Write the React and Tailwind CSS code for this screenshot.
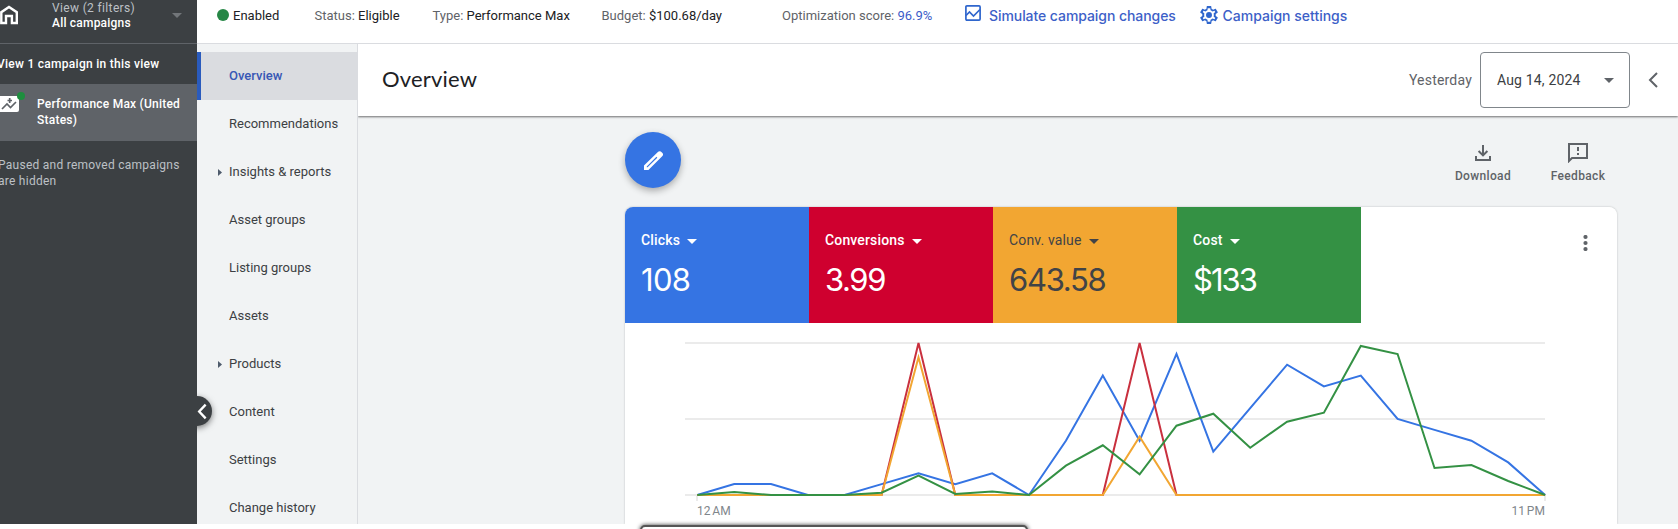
import React from 'react';

const HOURS = 24;
const CHART_LEFT = 72.3;
const CHART_STEP = 36.86;
const BASELINE = 172;

const clicks = [0, 1, 1, 0, 0, 1, 2, 1, 2, 0, 5, 11, 5, 13, 4, 8, 12, 10, 11, 7, 6, 5, 3, 0].map(v => v * 10.857);
const spikes = (first, second) => Array.from({ length: HOURS }, (_, i) => (i === 6 ? first : i === 12 ? second : 0));
const conversions = spikes(152, 152);
const convValue = spikes(137.7, 58.3);
const cost = [0, 3, 0, 0, 0, 2.3, 19.3, 1, 3.5, 0, 29.3, 49.7, 20.7, 69.3, 81.3, 47.3, 73.3, 82.3, 149, 141, 27, 30, 14, 0];

const series = [
    { id: 'clicks', color: '#3574e3', data: clicks },
    { id: 'conversions', color: '#c9303e', data: conversions },
    { id: 'value', color: '#f2a632', data: convValue },
    { id: 'cost', color: '#349144', data: cost },
];

const toPoints = (data) => data.map((v, i) => `${(CHART_LEFT + i * CHART_STEP).toFixed(1)},${(BASELINE - v).toFixed(1)}`).join(' ');

const navItems = [
    { label: 'Overview', active: true },
    { label: 'Recommendations' },
    { label: 'Insights & reports', expandable: true },
    { label: 'Asset groups' },
    { label: 'Listing groups' },
    { label: 'Assets' },
    { label: 'Products', expandable: true },
    { label: 'Content' },
    { label: 'Settings' },
    { label: 'Change history' },
];

const metrics = [
    { label: 'Clicks', value: '108', tile: 'bg-[#3574e3] text-white', weight: 'font-medium', spacing: 'tracking-[-0.7px]' },
    { label: 'Conversions', value: '3.99', tile: 'bg-[#cf002f] text-white', weight: 'font-medium', spacing: 'tracking-[-1.4px]' },
    { label: 'Conv. value', value: '643.58', tile: 'bg-[#f2a632] text-[#414347]', weight: 'font-normal', spacing: 'tracking-[-1.3px]' },
    { label: 'Cost', value: '$133', tile: 'bg-[#349144] text-white', weight: 'font-medium', spacing: 'tracking-[-2px]' },
];

const Caret = ({ className }) => (
    <svg viewBox="0 0 10 5" className={className} fill="currentColor">
        <path d="M0 0h10L5 5z" />
    </svg>
);

const Sidebar = () => (
    <aside className="relative z-10 flex h-[524px] w-[197px] shrink-0 flex-col bg-[#3c4043] text-[12px] leading-4 text-white">
        <div className="flex h-11 shrink-0 border-b border-[#5f6368]">
            <svg viewBox="0 0 18 20" className="mt-[5px] h-5 w-[18px] shrink-0" fill="none" stroke="currentColor" strokeWidth="2.4">
                <path d="M1.3 18V7.2L9 1.9l7.8 5.3V18h-4.9v-7H6v7z" />
            </svg>
            <div className="ml-[34px] w-[120px] font-medium tracking-[0.2px]">
                <p className="font-normal tracking-[0.35px] text-[#bdc1c6]">View (2 filters)</p>
                <p className="-mt-px">All campaigns</p>
            </div>
            <Caret className="mt-[13px] h-[5px] w-[10px] text-[#72767a]" />
        </div>
        <p className="-ml-[3px] h-10 shrink-0 pt-3 font-medium tracking-[0.27px] whitespace-nowrap">View 1 campaign in this view</p>
        <div className="flex h-[57px] shrink-0 bg-[#5f6368] pt-3">
            <div className="relative h-4 w-[19px] shrink-0 rounded-r-[2px] bg-white">
                <svg viewBox="0 0 19 16" className="h-4 w-[19px]" fill="none" stroke="#5f6368" strokeWidth="1.7">
                    <path d="M2 13l5-5 3.5 3.5L16 6M9.7 2v5M7.5 4.5h4.5" />
                </svg>
                <span className="absolute -top-1 right-[-6px] h-2 w-2 rounded-full bg-[#1e8e3e]" />
            </div>
            <p className="ml-[18px] font-medium tracking-[0.23px]">Performance Max (United<br />States)</p>
        </div>
        <p className="-ml-[2px] pt-4 tracking-[0.26px] whitespace-nowrap text-[#bdc1c6]">Paused and removed campaigns<br />are hidden</p>
        <div className="absolute top-[389px] left-[197px] h-[50px] w-8 overflow-hidden">
            <div className="-ml-[15px] mt-[7px] flex h-[30px] w-[30px] items-center justify-end rounded-full bg-[#3c4043] pr-[5px] shadow-[0_2px_6px_rgba(0,0,0,0.5)]">
                <svg viewBox="0 0 11 18" className="h-[17px] w-[10px]" fill="none" stroke="white" strokeWidth="2.6">
                    <path d="M9.5 1.5L2.4 9l7.1 7.5" />
                </svg>
            </div>
        </div>
    </aside>
);

const StatusBar = () => (
    <div className="flex h-11 shrink-0 items-start border-b border-[#dadce0] pt-2 pl-5 text-[13px] leading-4 whitespace-nowrap text-[#5f6368]">
        <span className="mt-px h-3 w-3 rounded-full bg-[#268746]" />
        <span className="ml-1 w-[81.5px] text-[#202124]">Enabled</span>
        <p className="w-[118px]">Status: <span className="text-[#202124]">Eligible</span></p>
        <p className="w-[169px]">Type: <span className="text-[#202124]">Performance Max</span></p>
        <p className="w-[180.5px]">Budget: <span className="text-[#202124]">$100.68/day</span></p>
        <p className="w-[183px]">Optimization score: <span className="text-[#3c5bc9]">96.9%</span></p>
        <svg viewBox="0 0 16 16" className="-mt-[3px] h-4 w-4" fill="none" stroke="#2f66cd" strokeWidth="1.7">
            <rect x="0.9" y="0.9" width="14.2" height="14.2" rx="1" />
            <path d="M1 10.5l3.5-3.5 4 4L15 4.5" />
        </svg>
        <span className="ml-2 w-[210.5px] font-['Inter'] text-[14px] font-medium tracking-[-0.07px] text-[#3d5fc8]">Simulate campaign changes</span>
        <svg viewBox="2 2 20 20" className="-mt-[2px] h-[18px] w-[18px]" fill="#2f66cd">
            <path fillRule="evenodd" d="M19.43 12.98c.04-.32.07-.64.07-.98s-.03-.66-.07-.98l2.11-1.65c.19-.15.24-.42.12-.64l-2-3.46c-.12-.22-.39-.3-.61-.22l-2.49 1c-.52-.4-1.08-.73-1.69-.98l-.38-2.65C14.46 2.18 14.25 2 14 2h-4c-.25 0-.46.18-.49.42l-.38 2.65c-.61.25-1.17.59-1.69.98l-2.49-1c-.23-.09-.49 0-.61.22l-2 3.46c-.13.22-.07.49.12.64l2.11 1.65c-.04.32-.07.65-.07.98s.03.66.07.98l-2.11 1.65c-.19.15-.24.42-.12.64l2 3.46c.12.22.39.3.61.22l2.49-1c.52.4 1.08.73 1.69.98l.38 2.65c.03.24.24.42.49.42h4c.25 0 .46-.18.49-.42l.38-2.65c.61-.25 1.17-.59 1.69-.98l2.49 1c.23.09.49 0 .61-.22l2-3.46c.12-.22.07-.49-.12-.64zM17.3 11.3c.08.6.08.8 0 1.4l-.2 1.1 1.8 1.5-.8 1.4-2.2-.8-1.2.9-1 .4-.3 2.4h-2.8l-.3-2.4-1-.4-1.2-.9-2.2.8-.8-1.4 1.8-1.5-.2-1.1a5 5 0 010-1.4l.2-1.1-1.8-1.5.8-1.4 2.2.8 1.2-.9 1-.4.3-2.4h2.8l.3 2.4 1 .4 1.2.9 2.2-.8.8 1.4-1.8 1.5z" />
            <circle cx="12" cy="12" r="3.3" />
        </svg>
        <span className="ml-[5px] font-['Inter'] text-[14px] font-medium tracking-[0px] text-[#3d5fc8]">Campaign settings</span>
    </div>
);

const CampaignNav = () => (
    <nav className="h-[480px] w-[161px] shrink-0 overflow-hidden border-r border-[#dadce0] bg-[#f1f3f4] pt-2 text-[13px] text-[#3c4043]">
        {navItems.map((item) => (
            <div
                key={item.label}
                className={`flex h-12 items-center border-l-4 whitespace-nowrap ${item.active ? 'border-[#2a5bbd] bg-[#dadce0] font-medium text-[#3757b5]' : 'border-transparent'}`}
            >
                <span className="flex w-7 pl-[17px]">
                    {item.expandable && (
                        <svg viewBox="0 0 4 7" className="h-[7px] w-1" fill="#4f5b6c"><path d="M0 0l4 3.5L0 7z" /></svg>
                    )}
                </span>
                {item.label}
            </div>
        ))}
    </nav>
);

const PageHeader = () => (
    <header className="relative flex h-[72px] shrink-0 items-center bg-white pl-6 shadow-[0_1px_2px_rgba(0,0,0,0.55)]">
        <h1 className="-mt-[3px] font-['Lato'] text-[22px] tracking-[0.2px] text-[#202124]">Overview</h1>
        <span className="ml-auto text-[14px] tracking-[0.2px] text-[#5f6368]">Yesterday</span>
        <button className="ml-2 flex h-14 w-[150px] items-center justify-between rounded-[4px] border border-[#80868b] pr-[15px] pl-4 text-[14px] tracking-[0.17px] text-[#3c4043]">
            Aug 14, 2024
            <Caret className="h-[5px] w-[10px] text-[#5f6368]" />
        </button>
        <svg viewBox="0 0 10 16" className="mr-[20px] ml-[18px] h-4 w-[10px]" fill="none" stroke="#5f6368" strokeWidth="2">
            <path d="M9 1L2 8l7 7" />
        </svg>
    </header>
);

const Toolbar = () => (
    <div className="flex h-[75px] items-start justify-between pt-4">
        <button className="flex h-14 w-14 items-center justify-center rounded-full bg-[#3574e3] shadow-[0_3px_7px_rgba(0,0,0,0.3)]">
            <svg viewBox="3 3 18 18" className="h-[19px] w-[19px]" fill="white">
                <path fillRule="evenodd" d="M3 16.8V21h4.2L20 8.2c1.4-1.3 1.4-2.5 0-3.8s-2.7-1.5-4.1-.2zM5.6 18.4v-.7L14.8 8.500l.8.8-9.200 9.100z" />
            </svg>
        </button>
        <div className="flex pr-[9px] text-[12px] font-medium leading-4 tracking-[0.35px] text-[#5f6368]">
            <div className="flex w-[60px] flex-col items-center pt-[13px]">
                <svg viewBox="0 0 16 16" className="h-4 w-4" fill="none" stroke="currentColor" strokeWidth="2">
                    <path d="M8 0v10M3.6 6L8 10.4 12.4 6M1 11v4h14v-4" />
                </svg>
                <span className="mt-[7px]">Download</span>
            </div>
            <div className="ml-[35px] flex w-[60px] flex-col items-center pt-[11px]">
                <svg viewBox="0 0 20 20" className="h-5 w-5" fill="none" stroke="currentColor" strokeWidth="2">
                    <path d="M1 18V1h18v14H4z" />
                    <path d="M10 4v4M10 10v2" />
                </svg>
                <span className="mt-[5px]">Feedback</span>
            </div>
        </div>
    </div>
);

const MetricTile = ({ metric }) => (
    <div className={`h-[116px] w-[184px] pt-[23px] pl-4 ${metric.tile}`}>
        <div className={`flex items-center text-[14px] leading-5 tracking-[0.15px] ${metric.weight}`}>
            {metric.label}
            <Caret className="mt-[3px] ml-[7px] h-[5px] w-[10px]" />
        </div>
        <p className={`mt-[10px] font-['Inter'] text-[31px] leading-10 ${metric.spacing}`}>{metric.value}</p>
    </div>
);

const Chart = () => (
    <div className="relative">
        <svg viewBox="0 0 992 201" className="h-[201px] w-full" fill="none">
            <path d="M60 20h860M60 96h860M60 172h860M72 172v6M920 172v6" stroke="#ebebeb" strokeWidth="2" />
            {series.map((s) => (
                <polyline key={s.id} points={toPoints(s.data)} stroke={s.color} strokeWidth="2" />
            ))}
        </svg>
        <div className="-mt-[21px] flex justify-between pr-[72px] pl-[72px] text-[12px] leading-4 tracking-[0.1px] [word-spacing:-1.5px] text-[#80868b]">
            <span>12 AM</span>
            <span>11 PM</span>
        </div>
    </div>
);

const ScorecardPanel = () => (
    <section className="h-[317px] w-[992px] overflow-hidden rounded-t-[8px] bg-white">
        <div className="flex">
            {metrics.map((m) => <MetricTile key={m.label} metric={m} />)}
            <svg viewBox="0 0 4 16" className="mt-7 mr-[29px] ml-auto h-4 w-[5px]" fill="#5f6368">
                <circle cx="2" cy="2" r="2.1" />
                <circle cx="2" cy="8" r="2.1" />
                <circle cx="2" cy="14" r="2.1" />
            </svg>
        </div>
        <Chart />
    </section>
);

export default function App() {
    return (
        <div className="relative flex h-[529px] w-[1678px] overflow-hidden bg-white font-['Roboto',sans-serif]">
            <Sidebar />
            <div className="flex min-w-0 flex-1 flex-col">
                <StatusBar />
                <div className="flex">
                    <CampaignNav />
                    <main className="h-[480px] min-w-0 flex-1 overflow-hidden bg-[#f1f3f4]">
                        <PageHeader />
                        <div className="ml-[267px] w-[992px]">
                            <Toolbar />
                            <div className="mt-4 rounded-t-[8px] shadow-[0_0_2px_rgba(60,64,67,0.35)]">
                                <ScorecardPanel />
                            </div>
                        </div>
                    </main>
                </div>
            </div>
            <div className="absolute top-[525px] left-[640px] h-8 w-[388px] rounded-[5px] border-2 border-[#555] bg-white shadow-[0_0_4px_rgba(0,0,0,0.8)]" />
        </div>
    );
}
